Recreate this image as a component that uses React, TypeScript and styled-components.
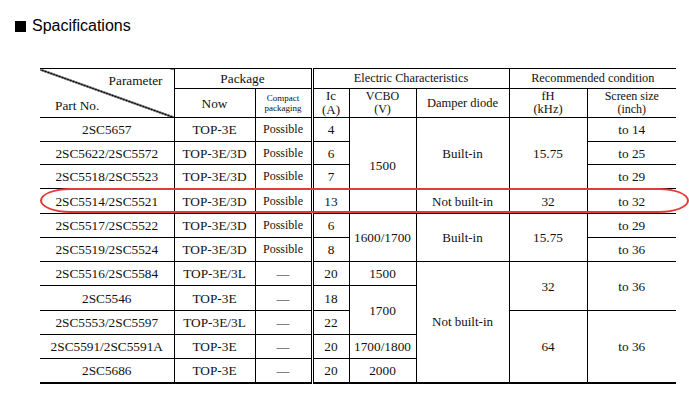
import React from "react";
import styled, { createGlobalStyle } from "styled-components";

const Global = createGlobalStyle`
  html, body { margin: 0; padding: 0; background: #fff; }
  body { font-family: "Liberation Serif", "Times New Roman", serif; color: #111; }
`;

const Page = styled.div`
  width: 689px;
  height: 402px;
  padding-top: 17px;
  box-sizing: border-box;
  overflow: hidden;
`;

const TitleRow = styled.div`
  display: flex;
  align-items: center;
  gap: 6px;
  margin-left: 15px;
  height: 18px;
  font-family: "Liberation Sans", Arial, sans-serif;
  font-size: 16px;
  line-height: 18px;
  color: #000;
`;

const Square = styled.span`
  width: 11px;
  height: 11px;
  background: #000;
  flex: none;
`;

const TableArea = styled.div`
  position: relative;
  margin: 33px 0 0 40px;
  width: 649px;
`;

const Table = styled.table`
  border-collapse: collapse;
  table-layout: fixed;
  width: 636px;
  border-top: 1px solid #000;
  border-bottom: 2px solid #000;
  border-left: hidden;
  border-right: hidden;
  font-family: "Liberation Serif", "Times New Roman", serif;
  color: #111;
`;

const Row = styled.tr<{ $h: number }>`
  height: ${(p) => p.$h}px;
`;

const Cell = styled.td<{ $size?: number; $lh?: number; $double?: boolean }>`
  border: 1px solid #000;
  ${(p) => (p.$double ? "border-left: 3px double #000;" : "")}
  padding: 0;
  text-align: center;
  vertical-align: middle;
  font-weight: normal;
  font-size: ${(p) => p.$size ?? 13.3}px;
  line-height: ${(p) => p.$lh ?? 15}px;
  white-space: nowrap;
`;

const DiagCell = styled.th`
  border: 1px solid #000;
  padding: 4px 0 0;
  vertical-align: top;
  font-weight: normal;
  font-size: 13.3px;
  line-height: 15px;
  background: linear-gradient(
    to top right,
    transparent calc(50% - 1.1px),
    #000 calc(50% - 0.5px),
    #000 calc(50% + 0.5px),
    transparent calc(50% + 1.1px)
  );
`;

const DiagTop = styled.div`
  text-align: right;
  padding-right: 11px;
`;

const DiagBottom = styled.div`
  text-align: left;
  padding-left: 15px;
  margin-top: 10px;
`;

const Highlight = styled.div`
  position: absolute;
  left: 0;
  top: 120px;
  width: 649px;
  height: 25px;
  box-sizing: border-box;
  border: 2px solid #e53935;
  border-radius: 30px / 12.5px;
  pointer-events: none;
`;

type RowData = { part: string; now: string; compact: string; ic: string; h: number };

const rows: RowData[] = [
  { part: "2SC5657", now: "TOP-3E", compact: "Possible", ic: "4", h: 24 },
  { part: "2SC5622/2SC5572", now: "TOP-3E/3D", compact: "Possible", ic: "6", h: 23 },
  { part: "2SC5518/2SC5523", now: "TOP-3E/3D", compact: "Possible", ic: "7", h: 24 },
  { part: "2SC5514/2SC5521", now: "TOP-3E/3D", compact: "Possible", ic: "13", h: 25 },
  { part: "2SC5517/2SC5522", now: "TOP-3E/3D", compact: "Possible", ic: "6", h: 24 },
  { part: "2SC5519/2SC5524", now: "TOP-3E/3D", compact: "Possible", ic: "8", h: 24 },
  { part: "2SC5516/2SC5584", now: "TOP-3E/3L", compact: "—", ic: "20", h: 24 },
  { part: "2SC5546", now: "TOP-3E", compact: "—", ic: "18", h: 25 },
  { part: "2SC5553/2SC5597", now: "TOP-3E/3L", compact: "—", ic: "22", h: 24 },
  { part: "2SC5591/2SC5591A", now: "TOP-3E", compact: "—", ic: "20", h: 24 },
  { part: "2SC5686", now: "TOP-3E", compact: "—", ic: "20", h: 24 },
];

const extras: React.ReactNode[] = [
  <>
    <Cell rowSpan={4}>1500</Cell>
    <Cell rowSpan={3} $size={13}>Built-in</Cell>
    <Cell rowSpan={3}>15.75</Cell>
    <Cell>to 14</Cell>
  </>,
  <Cell>to 25</Cell>,
  <Cell>to 29</Cell>,
  <>
    <Cell $size={13}>Not built-in</Cell>
    <Cell>32</Cell>
    <Cell>to 32</Cell>
  </>,
  <>
    <Cell rowSpan={2}>1600/1700</Cell>
    <Cell rowSpan={2} $size={13}>Built-in</Cell>
    <Cell rowSpan={2}>15.75</Cell>
    <Cell>to 29</Cell>
  </>,
  <Cell>to 36</Cell>,
  <>
    <Cell>1500</Cell>
    <Cell rowSpan={5} $size={13}>Not built-in</Cell>
    <Cell rowSpan={2}>32</Cell>
    <Cell rowSpan={2}>to 36</Cell>
  </>,
  <Cell rowSpan={2}>1700</Cell>,
  <>
    <Cell rowSpan={3}>64</Cell>
    <Cell rowSpan={3}>to 36</Cell>
  </>,
  <Cell>1700/1800</Cell>,
  <Cell>2000</Cell>,
];

const widths = [134, 81, 57, 37, 67, 93, 78, 89];

export default function App() {
  return (
    <Page>
      <Global />
      <TitleRow>
        <Square />
        <span>Spacifications</span>
      </TitleRow>
      <TableArea>
        <Table>
          <colgroup>
            {widths.map((w, i) => (
              <col key={i} style={{ width: w }} />
            ))}
          </colgroup>
          <thead>
            <Row $h={20}>
              <DiagCell rowSpan={2}>
                <DiagTop>Parameter</DiagTop>
                <DiagBottom>Part No.</DiagBottom>
              </DiagCell>
              <Cell as="th" colSpan={2}>Package</Cell>
              <Cell as="th" colSpan={3} $double $size={12.3}>
                Electric Characteristics
              </Cell>
              <Cell as="th" colSpan={2} $size={12.3}>
                Recommended condition
              </Cell>
            </Row>
            <Row $h={29}>
              <Cell as="th">Now</Cell>
              <Cell as="th" $size={9} $lh={10}>
                Compact
                <br />
                packaging
              </Cell>
              <Cell as="th" $double $size={13} $lh={14}>
                Ic
                <br />
                (A)
              </Cell>
              <Cell as="th" $size={12} $lh={13}>
                VCBO
                <br />
                (V)
              </Cell>
              <Cell as="th" $size={12.5}>Damper diode</Cell>
              <Cell as="th" $size={12.5} $lh={13}>
                fH
                <br />
                (kHz)
              </Cell>
              <Cell as="th" $size={12} $lh={13}>
                Screen size
                <br />
                (inch)
              </Cell>
            </Row>
          </thead>
          <tbody>
            {rows.map((r, i) => (
              <Row key={i} $h={r.h}>
                <Cell>{r.part}</Cell>
                <Cell>{r.now}</Cell>
                <Cell $size={r.compact === "Possible" ? 12 : 13}>{r.compact}</Cell>
                <Cell $double>{r.ic}</Cell>
                {extras[i]}
              </Row>
            ))}
          </tbody>
        </Table>
        <Highlight />
      </TableArea>
    </Page>
  );
}
